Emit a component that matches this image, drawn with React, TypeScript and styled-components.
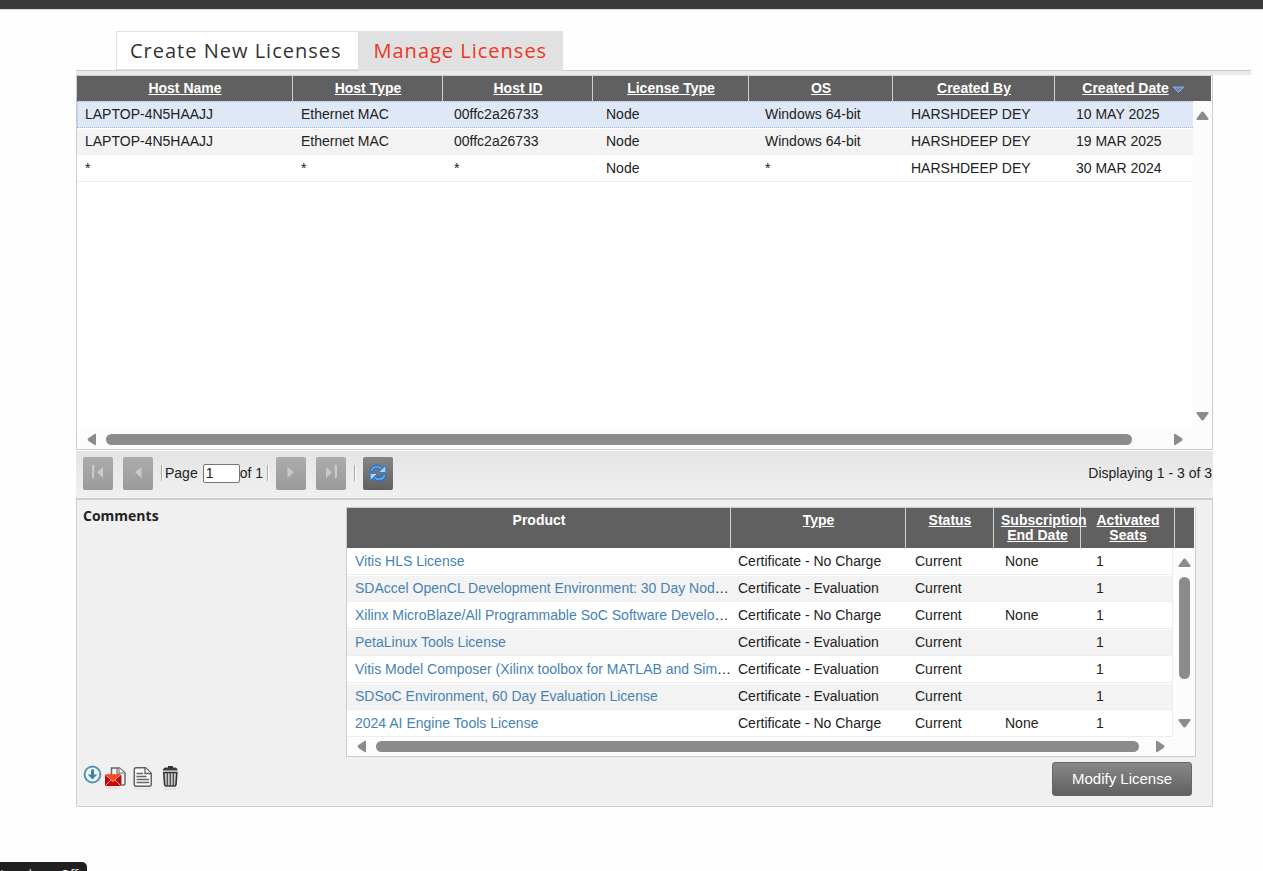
import React from "react";
import styled, { createGlobalStyle, css } from "styled-components";

const GlobalStyle = createGlobalStyle`
  *, *::before, *::after { box-sizing: border-box; }
  body {
    margin: 0;
    background: #fefefe;
    color: #222;
    font: 14px/18px "Liberation Sans", Arial, sans-serif;
  }
  button, input { font: inherit; color: inherit; }
`;

const TopBar = styled.header`
  height: 10px;
  background: #3a3a3a;
  border-bottom: 1px solid #dcdcdc;
`;

const Page = styled.main`
  padding: 21px 12px 64px 76px;
`;

const Tabs = styled.nav`
  display: flex;
  padding-left: 40px;
  border-bottom: 1px solid #ccc;
`;

const Tab = styled.a<{ $active?: boolean }>`
  height: 39px;
  padding: 0 16px 0 13px;
  border: 1px solid #e1e1e1;
  background: #fff;
  color: #333;
  font: 20px/38px "Open Sans", sans-serif;
  letter-spacing: 1px;
  text-decoration: none;
  white-space: nowrap;
  ${(p) =>
    p.$active &&
    css`
      height: 40px;
      margin-bottom: -1px;
      border-left: 0;
      padding: 0 15px;
      background: #e1e1e1;
      color: #ee3524;
    `}
`;

const Strip = styled.div`
  height: 4px;
  background: #e9e9e9;
`;

const Content = styled.div`
  margin-right: 38px;
`;

const GridBox = styled.section`
  display: flex;
  flex-direction: column;
  border: 1px solid #ccc;
  background: #fff;
`;

const GridBody = styled.div<{ $min: number }>`
  position: relative;
  min-height: ${(p) => p.$min}px;
`;

const Table = styled.table<{ $head: string; $rows: string; $gutter: number; $edged?: boolean }>`
  display: block;
  width: 100%;
  thead, tbody { display: block; }
  thead { margin-right: 1px; background: #606060; }
  tbody {
    margin-right: ${(p) => p.$gutter}px;
    border-right: ${(p) => (p.$edged ? "1px solid #ededed" : "0")};
  }
  tr { display: grid; }
  thead tr { grid-template-columns: ${(p) => p.$head}; }
  tbody tr { grid-template-columns: ${(p) => p.$rows}; }
`;

const HeadCell = styled.th`
  padding: 5px 6px 5px 7px;
  border-right: 1px solid #d0d0d0;
  color: #fff;
  font-weight: bold;
  line-height: 15px;
  text-align: center;
  &:last-child { border-right: 0; }
`;

const SortButton = styled.button`
  max-width: 100%;
  padding: 0;
  border: 0;
  background: none;
  color: #fff;
  text-decoration: underline;
  font-weight: bold;
  line-height: 15px;
`;

const Cell = styled.td`
  padding: 0 0 0 6px;
  line-height: 25px;
  overflow: hidden;
  text-overflow: ellipsis;
  white-space: nowrap;
  &:first-child { padding-left: 8px; }
`;

const Row = styled.tr<{ $selected?: boolean }>`
  height: 27px;
  border-top: 1px solid #fff;
  border-bottom: 1px solid #ededed;
  &:nth-child(even) { background: #f3f3f3; }
  ${(p) =>
    p.$selected &&
    css`
      background: #dfe8f6;
      border-top: 1px dotted #a3bae9;
      border-bottom: 1px dotted #a3bae9;
      ${Cell}:first-child {
        padding-left: 7px;
        border-left: 1px dotted #a3bae9;
      }
    `}
`;

const ProductLink = styled.a`
  color: #4682b4;
  text-decoration: none;
`;

const VBar = styled.div<{ $top: number; $inset: number }>`
  position: absolute;
  top: ${(p) => p.$top}px;
  right: 0;
  bottom: 0;
  width: 19px;
  padding: 10px ${(p) => p.$inset}px 9px 0;
  display: flex;
  flex-direction: column;
  align-items: flex-end;
  justify-content: space-between;
  background: #fcfcfc;
`;

const VThumb = styled.div`
  width: 11px;
  height: 102px;
  margin: 10px 1px auto;
  border-radius: 6px;
  background: #8b8b8b;
`;

const HBar = styled.div<{ $end: number }>`
  display: flex;
  align-items: center;
  height: 19px;
  padding: 0 ${(p) => p.$end}px 0 10px;
  background: #fcfcfc;
`;

const HThumb = styled.div<{ $gap: number }>`
  flex: 1;
  height: 11px;
  margin: 0 ${(p) => p.$gap}px 0 10px;
  border-radius: 6px;
  background: #8b8b8b;
`;

const Pager = styled.div`
  display: flex;
  align-items: center;
  height: 47px;
  margin-top: 1px;
  padding: 0 1px 3px 7px;
  background: linear-gradient(#e4e4e4, #f0f0f0);
`;

const PagerButton = styled.button<{ $live?: boolean }>`
  display: flex;
  align-items: center;
  justify-content: center;
  width: 30px;
  height: 33px;
  padding: 0;
  border: 0;
  border-radius: 2px;
  background: ${(p) =>
    p.$live ? "linear-gradient(#858585, #606060)" : "linear-gradient(#acacac, #9a9a9a)"};
`;

const PagerPair = styled.div`
  display: flex;
  gap: 10px;
`;

const Divider = styled.span`
  width: 2px;
  height: 16px;
  margin: 0 7px 0 8px;
  border-left: 1px solid #aca899;
  border-right: 1px solid #fff;
`;

const PageField = styled.label`
  display: flex;
  align-items: center;
  gap: 5px;
  margin-left: -5px;
`;

const PageInput = styled.input`
  width: 37px;
  height: 19px;
  padding: 0 2px;
  border: 1px solid #767676;
  border-radius: 2px;
  background: #fff;
`;

const PageTotal = styled.span`
  margin-right: -4px;
`;

const Displaying = styled.span`
  margin-left: auto;
`;

const Details = styled.section`
  display: flex;
  border: 1px solid #ccc;
  border-top-width: 2px;
  border-radius: 0 0 2px 2px;
  background: #f0f0f0;
  padding: 7px 16px 10px 6px;
`;

const Side = styled.div`
  display: flex;
  flex-direction: column;
  justify-content: space-between;
  width: 263px;
  flex: none;
`;

const Comments = styled.h2`
  margin: 0;
  font: bold 14px/18px "Open Sans", sans-serif;
`;

const Actions = styled.div`
  display: flex;
  align-items: flex-end;
  margin-bottom: 4px;
`;

const ActionButton = styled.button<{ $w: number }>`
  display: flex;
  width: ${(p) => p.$w}px;
  padding: 0;
  border: 0;
  background: none;
`;

const Products = styled.div`
  flex: 1;
  min-width: 0;
  display: flex;
  flex-direction: column;
`;

const ModifyButton = styled.button`
  align-self: flex-end;
  width: 140px;
  height: 34px;
  margin: 5px 4px 0 0;
  border: 1px solid #666;
  border-radius: 3px;
  background: linear-gradient(#888, #606060);
  color: #fff;
  font-size: 15px;
`;

const Toast = styled.div`
  position: fixed;
  left: 0;
  top: calc(100vh - 9px);
  width: 87px;
  height: 32px;
  padding: 4px 9px;
  display: flex;
  justify-content: flex-end;
  overflow: hidden;
  border-radius: 0 5px 5px 0;
  background: #202020;
  color: #fff;
  font: 12px/18px "Open Sans", sans-serif;
  white-space: nowrap;
`;

type Dir = "up" | "down" | "left" | "right";
const ARROWS: Record<Dir, string> = {
  up: "M5 1.5Q6.5 -.3 8 1.5L12.4 7.5Q13 9 11.5 9H1.5Q0 9 .6 7.5Z",
  down: "M5 7.5Q6.5 9.3 8 7.5L12.4 1.5Q13 0 11.5 0H1.5Q0 0 .6 1.5Z",
  left: "M1.5 5Q-.3 6.5 1.5 8L7.5 12Q9 12.6 9 11V2Q9 .4 7.5 1Z",
  right: "M7.5 5Q9.3 6.5 7.5 8L1.5 12Q0 12.6 0 11V2Q0 .4 1.5 1Z",
};

function Arrow({ dir }: { dir: Dir }) {
  const upright = dir === "up" || dir === "down";
  return (
    <svg width={upright ? 13 : 9} height={upright ? 9 : 13} aria-hidden="true">
      <path d={ARROWS[dir]} fill="#8b8b8b" />
    </svg>
  );
}

function PagerIcon({ flip, bar }: { flip?: boolean; bar?: boolean }) {
  return (
    <svg width="16" height="16" viewBox="0 0 16 16" aria-hidden="true">
      <g transform={flip ? "matrix(-1 0 0 1 16 0)" : undefined} fill="#c9c9c9">
        {bar && <path d="M2 0h2.500l-.5 14L2 12Z" />}
        <path d={bar ? "M13 2v11.500L12 12 7 7.300Z" : "M11.500 2v11.500L10.500 12 5 7.300Z"} />
      </g>
    </svg>
  );
}

function RefreshIcon() {
  return (
    <svg width="20" height="20" viewBox="0 0 20 20" aria-hidden="true">
      <g fill="none" stroke="#1f6fc9" strokeWidth="4">
        <path d="M3.500 8.500C4 3.500 10 2 13.500 5.500" />
        <path d="M16.500 11.500C16 16.500 10 18 6.500 14.500" />
      </g>
      <g fill="none" stroke="#55a6ef" strokeWidth="2">
        <path d="M3.500 8C4.500 3.500 10 2.300 13.500 5.500" />
        <path d="M16.500 12C15.500 16.500 10 17.700 6.500 14.500" />
      </g>
      <path d="M17.800 2.500v7h-7.500Z" fill="#a9d5f8" stroke="#2d7fd6" />
      <path d="M2.200 17.500v-7h7.500Z" fill="#a9d5f8" stroke="#2d7fd6" />
    </svg>
  );
}

function DownloadIcon() {
  return (
    <svg width="20" height="27" viewBox="0 0 20 27" aria-hidden="true">
      <circle cx="9.500" cy="9.500" r="7.900" fill="#eef4f6" stroke="#5395b0" strokeWidth="2" />
      <path d="M8 4.500h3v5h3.300L9.500 14.600 4.700 9.500H8Z" fill="#3c84a3" />
    </svg>
  );
}

function MailIcon() {
  return (
    <svg width="24" height="27" viewBox="0 0 24 27" aria-hidden="true">
      <ellipse cx="10" cy="23" rx="7" ry="1.500" fill="#e3e3e3" />
      <path d="M7.500 3h8l5.500 5v10.500q0 1.500-1.500 1.500H7.500Z" fill="#f7f7f7" stroke="#666" strokeWidth="1.500" />
      <path d="M13 3.500v4.500l4 3v8" fill="none" stroke="#777" strokeWidth="1.300" />
      <path d="M15 3v5h5.500" fill="#fff" stroke="#666" />
      <rect x="1" y="9.500" width="16" height="11.500" rx="1" fill="#c80808" />
      <path d="M1.500 9.500h15L9 16Z" fill="#ff4b1c" />
      <path d="M1.500 10 9 16.500 16.500 10M1.500 20.500 7 15M16.500 20.500 11 15" fill="none" stroke="#ffd3c6" strokeWidth=".8" />
    </svg>
  );
}

function DocumentIcon() {
  return (
    <svg width="20" height="27" viewBox="0 0 20 27" aria-hidden="true">
      <path d="M2 23h16v2H2Z" fill="#e4e4e4" />
      <path d="M3 2.800h9.500l5.700 5.400v11.300q0 1.700-1.700 1.700H3q-1.700 0-1.700-1.700V4.500q0-1.700 1.700-1.700Z" fill="#fafafa" stroke="#606060" strokeWidth="1.500" />
      <path d="M12 3v5.500h6" fill="#fff" stroke="#606060" strokeWidth="1.300" />
      <path d="M3.500 8.500H10M3.500 11.500h10M3.500 14.500h12.500M3.500 17.500h12.500" stroke="#666" strokeWidth="1.500" />
    </svg>
  );
}

function TrashIcon() {
  return (
    <svg width="17" height="27" viewBox="0 0 17 27" aria-hidden="true">
      <path d="M2 23h12v2H2Z" fill="#e4e4e4" />
      <path d="M6 1h5v2H6Z" fill="#333" />
      <path d="M3 2.500h10.500l2 1.500v1.500H1V4Z" fill="#3a3a3a" />
      <path d="M1.800 7.500h13l-.8 12q-.2 1.500-1.700 1.500h-8q-1.500 0-1.700-1.500Z" fill="#c9c9c9" stroke="#333" strokeWidth="1.600" />
      <path d="M5.300 8v12M8.300 8v12M11.300 8v12" stroke="#444" strokeWidth="1.200" />
    </svg>
  );
}

const columns = (...sizes: number[]) => sizes.map((s) => `minmax(0, ${s}fr)`).join(" ");

const HOST_COLUMNS = ["Host Name", "Host Type", "Host ID", "License Type", "OS", "Created By", "Created Date"];
const HOSTS = [
  ["LAPTOP-4N5HAAJJ", "Ethernet MAC", "00ffc2a26733", "Node", "Windows 64-bit", "HARSHDEEP DEY", "10 MAY 2025"],
  ["LAPTOP-4N5HAAJJ", "Ethernet MAC", "00ffc2a26733", "Node", "Windows 64-bit", "HARSHDEEP DEY", "19 MAR 2025"],
  ["*", "*", "*", "Node", "*", "HARSHDEEP DEY", "30 MAR 2024"],
];

const PRODUCT_COLUMNS = ["Type", "Status", "Subscription End Date", "Activated Seats"];

interface Product {
  name: string;
  type: string;
  end?: string;
  shortened?: boolean;
}

const NO_CHARGE = "Certificate - No Charge";
const EVALUATION = "Certificate - Evaluation";
const PRODUCTS: Product[] = [
  { name: "Vitis HLS License", type: NO_CHARGE, end: "None" },
  { name: "SDAccel OpenCL Development Environment: 30 Day Nod", type: EVALUATION, shortened: true },
  { name: "Xilinx MicroBlaze/All Programmable SoC Software Develo", type: NO_CHARGE, end: "None", shortened: true },
  { name: "PetaLinux Tools License", type: EVALUATION },
  { name: "Vitis Model Composer (Xilinx toolbox for MATLAB and Sim", type: EVALUATION, shortened: true },
  { name: "SDSoC Environment, 60 Day Evaluation License", type: EVALUATION },
  { name: "2024 AI Engine Tools License", type: NO_CHARGE, end: "None" },
];

export default function App() {
  return (
    <>
      <GlobalStyle />
      <TopBar />
      <Page>
        <Tabs>
          <Tab href="#create">Create New Licenses</Tab>
          <Tab href="#manage" $active aria-current="page">Manage Licenses</Tab>
        </Tabs>
        <Strip />
        <Content>
          <GridBox>
            <GridBody $min={354}>
              <Table
                $head={columns(216, 150, 150, 156, 144, 162, 156)}
                $rows={columns(218, 153, 152, 159, 146, 165, 123)}
                $gutter={19}
              >
                <thead>
                  <tr>
                    {HOST_COLUMNS.map((name) => (
                      <HeadCell key={name} scope="col">
                        <SortButton>{name}</SortButton>
                        {name === "Created Date" && (
                          <svg width="16" height="7" viewBox="0 0 16 7" aria-hidden="true">
                            <path d="M4 1h11L9.500 6.500Z" fill="#5b8fd8" stroke="#b9cde8" strokeWidth=".6" />
                          </svg>
                        )}
                      </HeadCell>
                    ))}
                  </tr>
                </thead>
                <tbody>
                  {HOSTS.map((host, i) => (
                    <Row key={i} $selected={i === 0}>
                      {host.map((value, j) => (
                        <Cell key={j}>{value}</Cell>
                      ))}
                    </Row>
                  ))}
                </tbody>
              </Table>
              <VBar $top={25} $inset={3} aria-hidden="true">
                <Arrow dir="up" />
                <Arrow dir="down" />
              </VBar>
            </GridBody>
            <HBar $end={29} aria-hidden="true">
              <Arrow dir="left" />
              <HThumb $gap={42} />
              <Arrow dir="right" />
            </HBar>
          </GridBox>
          <Pager>
            <PagerPair>
              <PagerButton aria-label="First page" disabled><PagerIcon bar /></PagerButton>
              <PagerButton aria-label="Previous page" disabled><PagerIcon /></PagerButton>
            </PagerPair>
            <Divider />
            <PageField>
              Page
              <PageInput defaultValue="1" />
            </PageField>
            <PageTotal>of 1</PageTotal>
            <Divider />
            <PagerPair>
              <PagerButton aria-label="Next page" disabled><PagerIcon flip /></PagerButton>
              <PagerButton aria-label="Last page" disabled><PagerIcon flip bar /></PagerButton>
            </PagerPair>
            <Divider />
            <PagerButton aria-label="Refresh" $live><RefreshIcon /></PagerButton>
            <Displaying>Displaying 1 - 3 of 3</Displaying>
          </Pager>
          <Details>
            <Side>
              <Comments>Comments</Comments>
              <Actions>
                <ActionButton $w={21} aria-label="Download"><DownloadIcon /></ActionButton>
                <ActionButton $w={29} aria-label="Email license"><MailIcon /></ActionButton>
                <ActionButton $w={29} aria-label="View license"><DocumentIcon /></ActionButton>
                <ActionButton $w={17} aria-label="Delete license"><TrashIcon /></ActionButton>
              </Actions>
            </Side>
            <Products>
              <GridBox>
                <GridBody $min={229}>
                  <Table
                    $head={`${columns(384, 175, 88, 87, 94)} 19px`}
                    $rows={columns(385, 177, 90, 91, 82)}
                    $gutter={22}
                    $edged
                  >
                    <thead>
                      <tr>
                        <HeadCell scope="col">Product</HeadCell>
                        {PRODUCT_COLUMNS.map((name) => (
                          <HeadCell key={name} scope="col">
                            <SortButton>{name}</SortButton>
                          </HeadCell>
                        ))}
                        <HeadCell as="td" />
                      </tr>
                    </thead>
                    <tbody>
                      {PRODUCTS.map((product) => (
                        <Row key={product.name}>
                          <Cell>
                            <ProductLink href="#product">{product.name}</ProductLink>
                            {product.shortened && "…"}
                          </Cell>
                          <Cell>{product.type}</Cell>
                          <Cell>Current</Cell>
                          <Cell>{product.end}</Cell>
                          <Cell>1</Cell>
                        </Row>
                      ))}
                    </tbody>
                  </Table>
                  <VBar $top={40} $inset={4} aria-hidden="true">
                    <Arrow dir="up" />
                    <VThumb />
                    <Arrow dir="down" />
                  </VBar>
                </GridBody>
                <HBar $end={30} aria-hidden="true">
                  <Arrow dir="left" />
                  <HThumb $gap={17} />
                  <Arrow dir="right" />
                </HBar>
              </GridBox>
              <ModifyButton>Modify License</ModifyButton>
            </Products>
          </Details>
        </Content>
      </Page>
      <Toast role="status">Microphone Off</Toast>
    </>
  );
}
